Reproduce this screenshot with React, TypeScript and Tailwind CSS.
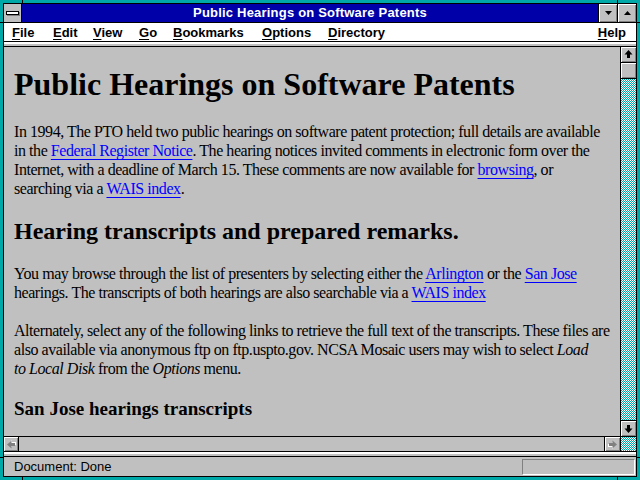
import type { ReactNode } from "react";

const bevel = "bg-[#c0c0c0] shadow-[inset_1px_1px_0_#ffffff,inset_-1px_-1px_0_#808080]";
const dither =
  "bg-[repeating-conic-gradient(#00a8a8_0_25%,#ffffff_0_50%)] bg-[length:2px_2px]";

function Arrow({ dir, disabled }: { dir: "up" | "down" | "left" | "right"; disabled?: boolean }) {
  const rot = { up: 0, right: 90, down: 180, left: 270 }[dir];
  const fill = disabled ? "#808080" : "#000000";
  return (
    <svg width="9" height="9" viewBox="0 0 9 9" style={{ transform: `rotate(${rot}deg)` }}>
      {disabled && <path d="M5 1 L9 5 L7 5 L7 9 L4 9 L4 5 L2 5 Z" fill="#ffffff" />}
      <path d="M4.5 0 L8.5 4.5 L6 4.5 L6 8 L3 8 L3 4.5 L0.5 4.5 Z" fill={fill} />
    </svg>
  );
}

function MenuItem({ k, rest, w }: { k: string; rest: string; w?: string }) {
  return (
    <span className={w}>
      <span className="underline underline-offset-2">{k}</span>
      {rest}
    </span>
  );
}

function A({ children }: { children: ReactNode }) {
  return <span className="text-[#0000ff] underline underline-offset-[3px]">{children}</span>;
}

export default function App() {
  return (
    <div className="relative h-[480px] w-[640px] bg-[#00a8a8] p-[3px] font-['Liberation_Sans',Arial,sans-serif]">
      {/* frame resize ticks */}
      <div className="absolute left-[22px] top-0 h-[3px] w-px bg-black" />
      <div className="absolute left-[617px] top-0 h-[3px] w-px bg-black" />
      <div className="absolute bottom-0 left-[22px] h-[3px] w-px bg-black" />
      <div className="absolute bottom-0 left-[617px] h-[3px] w-px bg-black" />
      <div className="absolute left-0 top-[22px] h-px w-[3px] bg-black" />
      <div className="absolute right-0 top-[22px] h-px w-[3px] bg-black" />
      <div className="absolute left-0 top-[457px] h-px w-[3px] bg-black" />
      <div className="absolute right-0 top-[457px] h-px w-[3px] bg-black" />

      <div className="flex h-full flex-col border border-black bg-[#c0c0c0]">
        {/* title bar */}
        <div className="flex h-[19px] shrink-0 border-b border-black">
          <div className="flex w-[18px] items-center justify-center border-r border-black bg-[#c0c0c0]">
            <div className="h-[4px] w-[13px] border border-black bg-white shadow-[1px_1px_0_#808080]" />
          </div>
          <div className="flex flex-1 items-center justify-center bg-[#0000a8] text-[13px] font-bold tracking-[0.2px] text-white">
            Public Hearings on Software Patents
          </div>
          <div className={`flex w-[19px] items-center justify-center border-l border-black ${bevel}`}>
            <svg width="7" height="4" viewBox="0 0 7 4">
              <path d="M0 0 H7 L3.5 4 Z" fill="#000" />
            </svg>
          </div>
          <div className={`flex w-[19px] items-center justify-center border-l border-black ${bevel}`}>
            <svg width="7" height="4" viewBox="0 0 7 4">
              <path d="M0 4 H7 L3.5 0 Z" fill="#000" />
            </svg>
          </div>
        </div>

        {/* menu bar */}
        <div className="flex h-[19px] shrink-0 items-center border-b border-black bg-white pl-[8px] pr-[10px] pt-px text-[13px] font-bold leading-none text-black">
          <MenuItem k="F" rest="ile" w="w-[41px]" />
          <MenuItem k="E" rest="dit" w="w-[40px]" />
          <MenuItem k="V" rest="iew" w="w-[46px]" />
          <MenuItem k="G" rest="o" w="w-[34px]" />
          <MenuItem k="B" rest="ookmarks" w="w-[89px]" />
          <MenuItem k="O" rest="ptions" w="w-[66px]" />
          <MenuItem k="D" rest="irectory" />
          <span className="ml-auto">
            <MenuItem k="H" rest="elp" />
          </span>
        </div>

        {/* toolbar separator */}
        <div className="h-[2px] shrink-0 bg-white" />
        <div className="h-[2px] shrink-0 bg-[#c0c0c0]" />
        <div className="h-px shrink-0 bg-black" />

        {/* document + scrollbars */}
        <div className="flex min-h-0 flex-1 flex-col">
          <div className="flex min-h-0 flex-1">
            <div className="min-w-0 flex-1 overflow-hidden whitespace-nowrap pl-[10px] pt-[19px] font-['Liberation_Serif','Times_New_Roman',serif] text-[16px] leading-[19px] text-black">
              <h1 className="text-[32px] font-bold leading-[37px]">Public Hearings on Software Patents</h1>
              <div className="tracking-[-0.45px]">
                <p className="mt-[19px]">
                  In 1994, The PTO held two public hearings on software patent protection; full details are available
                  <br />
                  in the <A>Federal Register Notice</A>. The hearing notices invited comments in electronic form over the
                  <br />
                  Internet, with a deadline of March 15. These comments are now available for <A>browsing</A>, or
                  <br />
                  searching via a <A>WAIS index</A>.
                </p>
                <h2 className="mt-[19px] text-[24px] font-bold leading-[28px] tracking-normal">
                  Hearing transcripts and prepared remarks.
                </h2>
                <p className="mt-[19px]">
                  You may browse through the list of presenters by selecting either the <A>Arlington</A> or the{" "}
                  <A>San Jose</A>
                  <br />
                  hearings. The transcripts of both hearings are also searchable via a <A>WAIS index</A>
                </p>
                <p className="mt-[19px]">
                  Alternately, select any of the following links to retrieve the full text of the transcripts. These files are
                  <br />
                  also available via anonymous ftp on ftp.uspto.gov. NCSA Mosaic users may wish to select <i>Load</i>
                  <br />
                  <i>to Local Disk</i> from the <i>Options</i> menu.
                </p>
                <h3 className="mt-[20px] text-[19px] font-bold leading-[22px] tracking-normal">
                  San Jose hearings transcripts
                </h3>
              </div>
            </div>

            {/* vertical scrollbar */}
            <div className="flex w-[16px] shrink-0 flex-col border-l border-black">
              <div className={`flex h-[16px] items-center justify-center border-b border-black ${bevel}`}>
                <Arrow dir="up" />
              </div>
              <div className={`h-[16px] border-b border-black ${bevel}`} />
              <div className={`flex-1 ${dither}`} />
              <div className={`flex h-[16px] items-center justify-center border-t border-black ${bevel}`}>
                <Arrow dir="down" />
              </div>
            </div>
          </div>

          {/* horizontal scrollbar */}
          <div className="flex h-[16px] shrink-0 border-y border-black">
            <div className={`flex w-[15px] items-center justify-center border-r border-black ${bevel}`}>
              <Arrow dir="left" disabled />
            </div>
            <div className="flex-1 bg-[#c0c0c0]" />
            <div className={`flex w-[16px] items-center justify-center border-l border-black ${bevel}`}>
              <Arrow dir="right" disabled />
            </div>
            <div className={`w-[16px] border-l border-black ${dither}`} />
          </div>
        </div>

        <div className="h-[2px] shrink-0 bg-white" />
        <div className="h-[2px] shrink-0 bg-[#c0c0c0]" />
        <div className="h-px shrink-0 bg-black" />

        {/* status bar */}
        <div className="flex h-[19px] shrink-0 items-center pl-[10px] pr-px text-[13px] text-black">
          <span>Document: Done</span>
          <div className="ml-auto h-[16px] w-[113px] border border-b-white border-l-[#808080] border-r-white border-t-[#808080]" />
        </div>
      </div>
    </div>
  );
}
